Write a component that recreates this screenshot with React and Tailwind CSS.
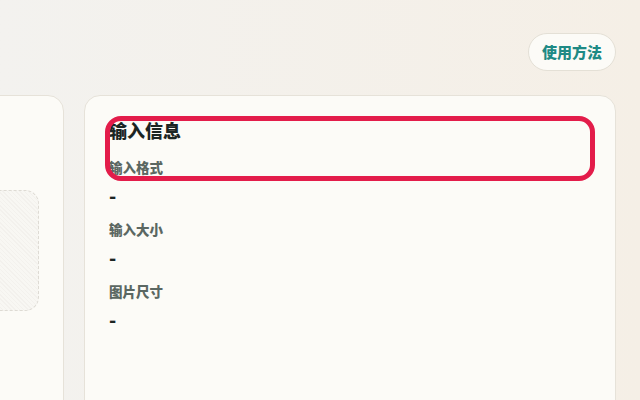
import React from "react";

const font = { fontFamily: '"Noto Sans CJK SC", "Noto Sans", sans-serif' };

function Field({ label, first }) {
  return (
    <div className={first ? "mt-[17px]" : "mt-3"}>
      <div className="text-[13.5px] leading-[20px] font-black text-[#5b6762]">{label}</div>
      <div className="mt-1.5 text-[19px] leading-[24px] font-black text-[#1b2523]">-</div>
    </div>
  );
}

export default function App() {
  return (
    <div
      style={font}
      className="relative h-[400px] w-[640px] overflow-hidden bg-linear-to-r from-[#f3f2ef] to-[#f5efe6] px-6"
    >
      <div className="flex justify-end pt-[33px]">
        <button className="h-[38px] rounded-full border border-[#e4e0d6] bg-[#fcfbf7] px-[13px] text-[15px] font-black text-[#1f8a85]">
          使用方法
        </button>
      </div>
      <div className="mt-6 flex justify-end gap-5">
        <div className="h-[340px] w-[300px] shrink-0 rounded-[16px] border border-[#e6e2d9] bg-[#fcfbf7] p-6">
          <div className="mt-[70px] h-[121px] rounded-[14px] border border-dashed border-[#dedbd4] bg-[#f8f7f3] bg-[repeating-linear-gradient(45deg,#f3f1ed_0,#f3f1ed_1px,transparent_1px,transparent_3px)]" />
        </div>
        <div className="h-[340px] w-[532px] shrink-0 rounded-[16px] border border-[#e6e2d9] bg-[#fcfbf7] px-6 pt-[24px]">
          <div className="text-[18px] leading-[20px] font-black text-[#1b2523]">输入信息</div>
          <Field label="输入格式" first />
          <Field label="输入大小" />
          <Field label="图片尺寸" />
        </div>
      </div>
      <div className="pointer-events-none absolute left-[105px] top-[116px] h-[65px] w-[490px] rounded-[16px] border-[5px] border-[#e31c4a]" />
    </div>
  );
}
